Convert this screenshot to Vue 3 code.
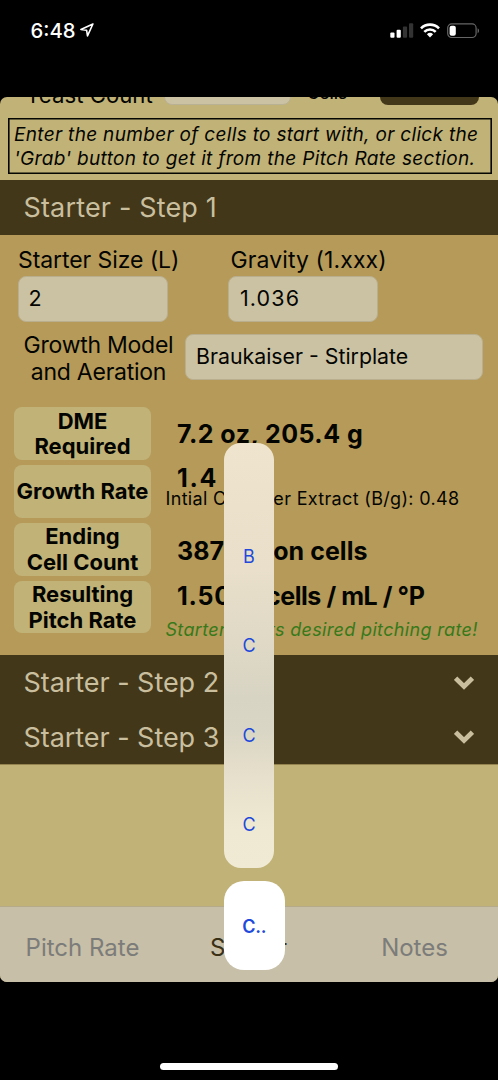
<script setup>
const results = [
  { label: ['DME', 'Required'], key: 'dme' },
  { label: ['Growth Rate'], key: 'growth' },
  { label: ['Ending', 'Cell Count'], key: 'ending' },
  { label: ['Resulting', 'Pitch Rate'], key: 'pitch' },
]
const steps = ['Starter - Step 2', 'Starter - Step 3']
const options = ['B', 'C', 'C', 'C']
</script>

<template>
  <div class="phone">
    <header class="status">
      <div class="clock">
        <span>6:48</span>
        <svg width="14" height="14" viewBox="0 0 14 14">
          <path d="M12.9 1 L0.9 6.5 L6.6 7.2 L7.5 12.9 Z" fill="none" stroke="#fff" stroke-width="1.6" stroke-linejoin="round" />
        </svg>
      </div>
      <div class="indicators">
        <svg class="signal" width="24" height="16" viewBox="0 0 24 16">
          <rect x="0.3" y="9.6" width="4.2" height="5.2" rx="1" fill="#fff" />
          <rect x="6.6" y="6.8" width="4.2" height="8" rx="1" fill="#fff" />
          <rect x="12.9" y="3.5" width="4.2" height="11.3" rx="1" fill="#333" />
          <rect x="19" y="0.3" width="4.2" height="14.5" rx="1" fill="#333" />
        </svg>
        <svg class="wifi" width="20" height="15" viewBox="0 0 20 15">
          <g fill="none" stroke="#fff" stroke-width="2.6">
            <path d="M1 5.3 A12.8 12.8 0 0 1 19 5.3" />
            <path d="M4.3 8.8 A8.1 8.1 0 0 1 15.7 8.8" />
          </g>
          <path d="M6.9 11.2 A4.6 4.6 0 0 1 13.1 11.2 L10 14.4 Z" fill="#fff" />
        </svg>
        <svg class="battery" width="33" height="16" viewBox="0 0 33 16">
          <rect x="0.7" y="0.9" width="28.4" height="13.6" rx="4" fill="none" stroke="#666" stroke-width="1.2" />
          <rect x="2.6" y="2.7" width="6.2" height="10" rx="2" fill="#fff" />
          <path d="M30.6 5.2 C32.5 6 32.5 9.4 30.6 10.2 Z" fill="#666" />
        </svg>
      </div>
    </header>

    <main class="screen">
      <div class="yeast">
        <span class="yeast-label">Yeast Count</span>
        <span class="yeast-field"></span>
        <span class="yeast-unit">Cells</span>
        <span class="grab"></span>
      </div>

      <p class="hint">
        <span>Enter the number of cells to start with, or click the</span>
        <span>'Grab' button to get it from the Pitch Rate section.</span>
      </p>

      <h2 class="step first">Starter - Step 1</h2>

      <section class="body">
        <div class="fields">
          <label class="field">
            <span class="name">Starter Size (L)</span>
            <span class="input">2</span>
          </label>
          <label class="field gravity">
            <span class="name">Gravity (1.xxx)</span>
            <span class="input digits">1.036</span>
          </label>
        </div>

        <div class="model">
          <div class="model-label"><span>Growth Model</span><span>and Aeration</span></div>
          <div class="input select">Braukaiser - Stirplate</div>
        </div>

        <div class="results">
          <div v-for="r in results" :key="r.key" class="result">
            <div class="pill"><span v-for="line in r.label" :key="line">{{ line }}</span></div>
            <div class="value" :class="r.key">
              <b v-if="r.key === 'dme'">7.2 oz, 205.4 g</b>
              <template v-else-if="r.key === 'growth'">
                <b>1.4</b><small>Intial Cells per Extract (B/g): 0.48</small>
              </template>
              <b v-else-if="r.key === 'ending'">387 billion cells</b>
              <template v-else>
                <b><i>1.50</i> M cells / mL / °P</b><em>Starter meets desired pitching rate!</em>
              </template>
            </div>
          </div>
        </div>
      </section>

      <div class="collapsed">
        <h2 v-for="s in steps" :key="s" class="step">
          <span>{{ s }}</span>
          <svg width="20" height="14" viewBox="0 0 20 14">
            <path d="M1.6 2.2 L10 10.4 L18.4 2.2" fill="none" stroke="#c9bf9f" stroke-width="4.8" />
          </svg>
        </h2>
      </div>

      <nav class="tabs">
        <span>Pitch Rate</span>
        <span class="active">Starter</span>
        <span>Notes</span>
      </nav>
    </main>

    <div class="home"></div>

    <div class="sheet">
      <div class="options"><span v-for="(o, i) in options" :key="i">{{ o }}</span></div>
      <div class="cancel">C..</div>
    </div>
  </div>
</template>

<style>
body {
  background: #000;
}
</style>

<style scoped>
.phone {
  position: relative;
  box-sizing: border-box;
  width: 498px;
  height: 1080px;
  overflow: hidden;
  background: #000;
  color: #040501;
  font-family: Inter, "Liberation Sans", sans-serif;
  white-space: nowrap;
}
.status {
  display: flex;
  justify-content: space-between;
  box-sizing: border-box;
  height: 97px;
  padding: 18px 18px 0 30.5px;
  color: #fff;
}
.clock {
  display: flex;
  gap: 4px;
  height: 25px;
  font-size: 20.3px;
  font-weight: 550;
  line-height: 26px;
}
.clock svg {
  margin-top: 5px;
}
.indicators {
  display: flex;
  padding-top: 5px;
}
.wifi {
  margin-left: 6px;
}
.battery {
  margin-left: 7px;
}
.screen {
  display: flex;
  flex-direction: column;
  height: 885px;
  overflow: hidden;
  border-radius: 7px;
  background: #c1b277;
}
.yeast {
  display: flex;
  align-items: flex-end;
  height: 8px;
  padding-left: 25.5px;
}
.yeast-label {
  width: 138.5px;
  height: 26px;
  margin-bottom: -3px;
  font-size: 22.2px;
  line-height: 26px;
}
.yeast-field {
  box-sizing: border-box;
  width: 127px;
  height: 45px;
  border: 1px solid #b9b194;
  border-radius: 8px;
  background: #cbc2a4;
}
.yeast-unit {
  width: 73px;
  margin: 0 0 1px 16px;
  font-size: 17px;
  font-weight: 500;
  line-height: 22px;
}
.grab {
  width: 99px;
  height: 45px;
  border-radius: 8px;
  background: #433719;
}
.hint {
  display: flex;
  flex-direction: column;
  box-sizing: border-box;
  width: 484px;
  height: 56px;
  margin: 13px 0 6px 8px;
  padding: 4px 0 0 5px;
  border: 1px solid #060602;
  box-shadow: inset 0 0 0 0.6px #060602;
  font-size: 19px;
  font-style: italic;
  line-height: 24px;
  letter-spacing: 0.32px;
}
.step {
  display: flex;
  align-items: center;
  justify-content: space-between;
  box-sizing: border-box;
  height: 54.5px;
  margin: 0;
  padding: 1px 24px 0 23.5px;
  background: #433719;
  color: #c9bf9f;
  font-size: 27px;
  font-weight: 400;
  line-height: 55px;
}
.step span {
  letter-spacing: -0.05px;
}
.first {
  padding-top: 0.5px;
  letter-spacing: 0.16px;
}
.body {
  box-sizing: border-box;
  height: 420.5px;
  padding-top: 12.5px;
  background: #b59a59;
}
.fields {
  display: flex;
  gap: 60px;
  padding-left: 17.5px;
}
.field {
  display: flex;
  flex-direction: column;
  width: 150px;
}
.name {
  height: 28.5px;
  padding-left: 0.5px;
  font-size: 23px;
  line-height: 27px;
  letter-spacing: -0.08px;
}
.gravity .name {
  padding-left: 3px;
  letter-spacing: 0.1px;
}
.input {
  box-sizing: border-box;
  height: 46px;
  padding-left: 10px;
  border: 1px solid #b9af8e;
  border-radius: 8px;
  background: #cbc2a4;
  font-size: 21.5px;
  line-height: 43px;
}
.digits {
  padding-left: 11.5px;
  letter-spacing: 1.1px;
}
.model {
  display: flex;
  margin-top: 9px;
}
.model-label {
  display: flex;
  flex-direction: column;
  width: 173px;
  padding: 1px 0 0 12px;
  text-align: center;
  font-size: 23px;
  line-height: 27.3px;
  letter-spacing: -0.25px;
}
.select {
  width: 298px;
  margin-top: 3.5px;
  font-size: 21.3px;
}
.results {
  display: flex;
  flex-direction: column;
  gap: 5px;
  margin-top: 21.2px;
}
.result {
  display: flex;
  gap: 14.5px;
  height: 52.8px;
  padding-left: 14px;
}
.pill {
  display: flex;
  flex-direction: column;
  justify-content: center;
  box-sizing: border-box;
  width: 137px;
  padding-top: 1.5px;
  border-radius: 8px;
  background: #c1b277;
  text-align: center;
  font-size: 22px;
  font-weight: 680;
  line-height: 25.8px;
  letter-spacing: 0;
}
.value {
  display: flex;
  flex-direction: column;
}
.value b {
  height: 29px;
  margin-left: 11.5px;
  font-size: 25px;
  font-weight: 700;
  line-height: 29px;
  letter-spacing: 0.05px;
}
.value small,
.value em {
  font-size: 18px;
  line-height: 22px;
  letter-spacing: 0.33px;
}
.dme b {
  margin-top: 12.5px;
  letter-spacing: 0.48px;
}
.growth b {
  margin-top: -1.2px;
  letter-spacing: 1.7px;
}
.growth small {
  margin-top: -4.8px;
}
.ending b {
  margin-top: 14.5px;
}
.pitch b {
  margin-top: 1.7px;
  letter-spacing: -0.42px;
}
.pitch i {
  font-style: normal;
  letter-spacing: 0.8px;
}
.pitch em {
  margin-top: 8px;
  color: #37791a;
}
.collapsed {
  height: 109px;
  border-bottom: 1px solid #94834f;
}
.tabs {
  display: grid;
  grid-template-columns: repeat(3, 1fr);
  box-sizing: border-box;
  height: 76.5px;
  margin-top: auto;
  border-top: 1px solid #b5ab8a;
  background: #c7bfa7;
  color: #7c7c7a;
  font-size: 24px;
  line-height: 81px;
  text-align: center;
}
.tabs span {
  margin-left: -1px;
}
.active {
  color: #3a3015;
}
.home {
  width: 178px;
  height: 7px;
  margin: 80.5px 0 0 160px;
  border-radius: 4px;
  background: #fff;
}
.sheet {
  position: absolute;
  top: 443px;
  left: 224px;
  color: #2149dc;
  font-size: 18px;
}
.options {
  display: grid;
  grid-template-rows: repeat(4, 89.4px);
  align-items: center;
  box-sizing: border-box;
  width: 50px;
  height: 425px;
  padding-top: 68.6px;
  border-radius: 17px;
  background: linear-gradient(#efe4cd 0%, #e9dfca 30%, #dfd9c6 47%, #d8d4c3 60%, #dad6c5 68%, #e7e0cc 79%, #efe8d2 91%, #f0ead5 100%);
  text-align: center;
}
.cancel {
  box-sizing: border-box;
  width: 60.5px;
  height: 89px;
  margin-top: 13px;
  border-radius: 20px;
  background: #fff;
  font-weight: 600;
  letter-spacing: -0.3px;
  line-height: 91px;
  text-align: center;
}
</style>
